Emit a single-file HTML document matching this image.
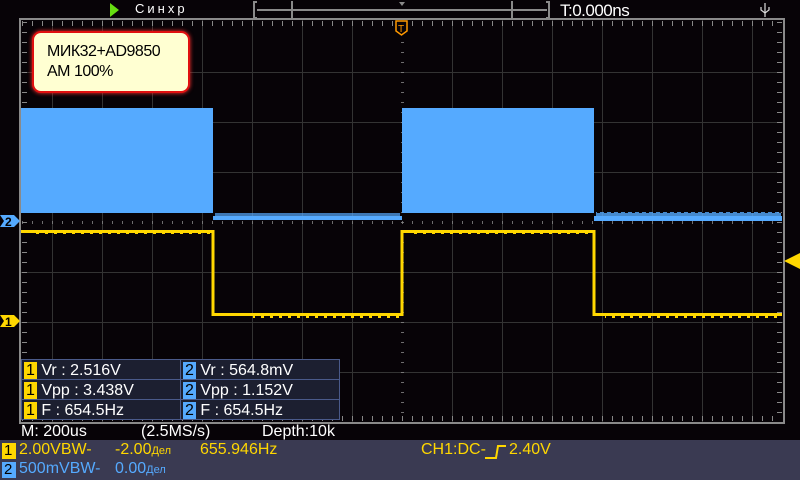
<!DOCTYPE html>
<html><head><meta charset="utf-8"><style>
body{margin:0;width:800px;height:480px;background:#070307;overflow:hidden;font-family:"Liberation Sans",sans-serif;position:relative}
.t{position:absolute;white-space:nowrap}
</style></head><body>
<svg width="800" height="480" style="position:absolute;left:0;top:0">
<defs>
<pattern id="vt" width="10" height="10" patternUnits="userSpaceOnUse" x="2" y="0"><rect x="0" y="0" width="1" height="10" fill="#888"/></pattern>
<pattern id="ht" width="10" height="10" patternUnits="userSpaceOnUse" x="0" y="2"><rect x="0" y="0" width="10" height="1" fill="#888"/></pattern>
<pattern id="bn" width="7" height="6" patternUnits="userSpaceOnUse"><rect x="0" y="0" width="7" height="6" fill="#55aaff"/><rect x="2" y="0" width="3" height="3" fill="#070307"/></pattern>
<pattern id="yn" width="9" height="4" patternUnits="userSpaceOnUse"><rect x="0" y="0" width="3" height="2" fill="#ffd700"/></pattern>
</defs>
<g stroke="#333" stroke-width="1">
<line x1="52.5" y1="20" x2="52.5" y2="422"/><line x1="102.5" y1="20" x2="102.5" y2="422"/><line x1="152.5" y1="20" x2="152.5" y2="422"/><line x1="202.5" y1="20" x2="202.5" y2="422"/><line x1="252.5" y1="20" x2="252.5" y2="422"/><line x1="302.5" y1="20" x2="302.5" y2="422"/><line x1="352.5" y1="20" x2="352.5" y2="422"/><line x1="452.5" y1="20" x2="452.5" y2="422"/><line x1="502.5" y1="20" x2="502.5" y2="422"/><line x1="552.5" y1="20" x2="552.5" y2="422"/><line x1="602.5" y1="20" x2="602.5" y2="422"/><line x1="652.5" y1="20" x2="652.5" y2="422"/><line x1="702.5" y1="20" x2="702.5" y2="422"/><line x1="752.5" y1="20" x2="752.5" y2="422"/>
<line x1="21" y1="72.5" x2="783" y2="72.5"/><line x1="21" y1="122.5" x2="783" y2="122.5"/><line x1="21" y1="172.5" x2="783" y2="172.5"/><line x1="21" y1="272.5" x2="783" y2="272.5"/><line x1="21" y1="322.5" x2="783" y2="322.5"/><line x1="21" y1="372.5" x2="783" y2="372.5"/>
</g>
<rect x="22" y="221" width="760" height="3" fill="url(#vt)" opacity=".8"/>
<rect x="401" y="22" width="3" height="400" fill="url(#ht)" opacity=".8"/>
<rect x="22" y="21" width="760" height="5" fill="url(#vt)"/>
<rect x="22" y="416" width="760" height="5" fill="url(#vt)"/>
<rect x="22" y="22" width="5" height="398" fill="url(#ht)"/>
<rect x="777" y="22" width="5" height="398" fill="url(#ht)"/>
<rect x="20" y="19" width="764" height="404" fill="none" stroke="#8a8a8a" stroke-width="2"/>
<!-- blue ch2 -->
<rect x="21" y="108" width="192" height="105" fill="#55aaff"/>
<rect x="402" y="108" width="192" height="105" fill="#55aaff"/>
<rect x="213" y="216" width="189" height="4" fill="#55aaff"/>
<rect x="594" y="216" width="188" height="5" fill="#55aaff"/>
<rect x="215" y="213" width="185" height="3" fill="url(#bn)" opacity=".7"/>
<rect x="596" y="212" width="185" height="4" fill="url(#bn)" opacity=".8"/>
<!-- yellow ch1 -->
<polyline points="21,231.5 213,231.5 213,314.5 402,314.5 402,231.5 594,231.5 594,314.5 782,314.5" fill="none" stroke="#ffd700" stroke-width="3"/>
<rect x="30" y="233" width="180" height="2" fill="url(#yn)"/>
<rect x="253" y="316" width="146" height="2" fill="url(#yn)"/>
<rect x="410" y="233" width="180" height="2" fill="url(#yn)"/>
<rect x="605" y="316" width="176" height="2" fill="url(#yn)"/>
<polygon points="784,261 800,253 800,269" fill="#ffd700"/>
<path d="M0,215 H14 L20,221 L14,227 H0 L4,221 Z" fill="#55aaff"/>
<path d="M0,315 H14 L20,321 L14,327 H0 L4,321 Z" fill="#ffd700"/>
<text x="5" y="226" font-size="12" font-weight="bold" fill="#000" font-family="Liberation Sans">2</text>
<text x="5" y="326" font-size="12" font-weight="bold" fill="#000" font-family="Liberation Sans">1</text>
<path d="M396,21 H407 V31 L401.5,35 L396,31 Z" fill="#070307" stroke="#ff9900" stroke-width="1.5"/>
<text x="398" y="32" font-size="10" fill="#ff9900" font-family="Liberation Sans">T</text>
<polygon points="110,3 110,17 119,10" fill="#66dd11"/>
<g stroke="#8a8a8a" stroke-width="2" fill="none">
<path d="M257,2 H254 V18 H257"/><path d="M293,2 H292 V18 H293"/><path d="M511,2 H512 V18 H511"/><path d="M546,2 H549 V18 H546"/>
</g>
<line x1="257" y1="10" x2="547" y2="10" stroke="#8a8a8a" stroke-width="2"/>
<polygon points="399,2 405,2 402,6" fill="#8a8a8a"/>
<g stroke="#ddd" stroke-width="1.2" fill="none"><line x1="765" y1="3" x2="765" y2="17"/><path d="M761,7 V10 L765,13 L769,10 V7"/></g>
<rect x="21.5" y="359.5" width="318" height="60" fill="#1c1f30" stroke="#4a5a8a"/>
<line x1="180.5" y1="359" x2="180.5" y2="420" stroke="#4a5a8a"/>
<line x1="21" y1="379.5" x2="340" y2="379.5" stroke="#4a5a8a"/>
<line x1="21" y1="399.5" x2="340" y2="399.5" stroke="#4a5a8a"/>
<rect x="0" y="440" width="800" height="40" fill="#3a3a52"/>
<rect x="2" y="443" width="14" height="16" fill="#ffd700"/>
<rect x="2" y="462" width="14" height="16" fill="#55aaff"/>
<path d="M485,458 H496 L498,446 H506" fill="none" stroke="#ffd700" stroke-width="2"/>
</svg>
<div class="t" style="left:135px;top:1px;color:#fff;font-size:13px;letter-spacing:3px">Синхр</div>
<div class="t" style="left:560px;top:1px;color:#fff;font-size:17px;letter-spacing:-.5px">T:0.000ns</div>
<div style="position:absolute;left:32px;top:31px;width:154px;height:58px;background:#ffffd2;border:2px solid #e01010;border-radius:9px;box-shadow:0 0 4px #ff3030"></div>
<div class="t" style="left:47px;top:42px;color:#000;font-size:16px;line-height:20px;letter-spacing:-.5px">МИК32+AD9850<br>AM 100%</div>
<div style="position:absolute;left:24px;top:361px;font-size:16px;color:#fff;line-height:20px">
<div class="t" style="left:0;top:0"><span style="background:#ffd700;color:#000;padding:0 2px">1</span> Vr : 2.516V</div>
<div class="t" style="left:0;top:20px"><span style="background:#ffd700;color:#000;padding:0 2px">1</span> Vpp : 3.438V</div>
<div class="t" style="left:0;top:40px"><span style="background:#ffd700;color:#000;padding:0 2px">1</span> F : 654.5Hz</div>
<div class="t" style="left:159px;top:0"><span style="background:#55aaff;color:#000;padding:0 2px">2</span> Vr : 564.8mV</div>
<div class="t" style="left:159px;top:20px"><span style="background:#55aaff;color:#000;padding:0 2px">2</span> Vpp : 1.152V</div>
<div class="t" style="left:159px;top:40px"><span style="background:#55aaff;color:#000;padding:0 2px">2</span> F : 654.5Hz</div>
</div>
<div class="t" style="left:21px;top:423px;color:#fff;font-size:16px">M: 200us</div>
<div class="t" style="left:141px;top:423px;color:#fff;font-size:16px">(2.5MS/s)</div>
<div class="t" style="left:262px;top:423px;color:#fff;font-size:16px">Depth:10k</div>
<div class="t" style="left:4px;top:442px;color:#000;font-size:15px">1</div>
<div class="t" style="left:4px;top:461px;color:#000;font-size:15px">2</div>
<div class="t" style="left:19px;top:441px;color:#ffd700;font-size:16px">2.00VBW-</div>
<div class="t" style="left:115px;top:441px;color:#ffd700;font-size:16px">-2.00<span style="font-size:11px">Дел</span></div>
<div class="t" style="left:200px;top:441px;color:#ffd700;font-size:16px">655.946Hz</div>
<div class="t" style="left:421px;top:441px;color:#ffd700;font-size:16px">CH1:DC-</div>
<div class="t" style="left:509px;top:441px;color:#ffd700;font-size:16px">2.40V</div>
<div class="t" style="left:19px;top:460px;color:#55aaff;font-size:16px">500mVBW-</div>
<div class="t" style="left:115px;top:460px;color:#55aaff;font-size:16px">0.00<span style="font-size:11px">Дел</span></div>
</body></html>
